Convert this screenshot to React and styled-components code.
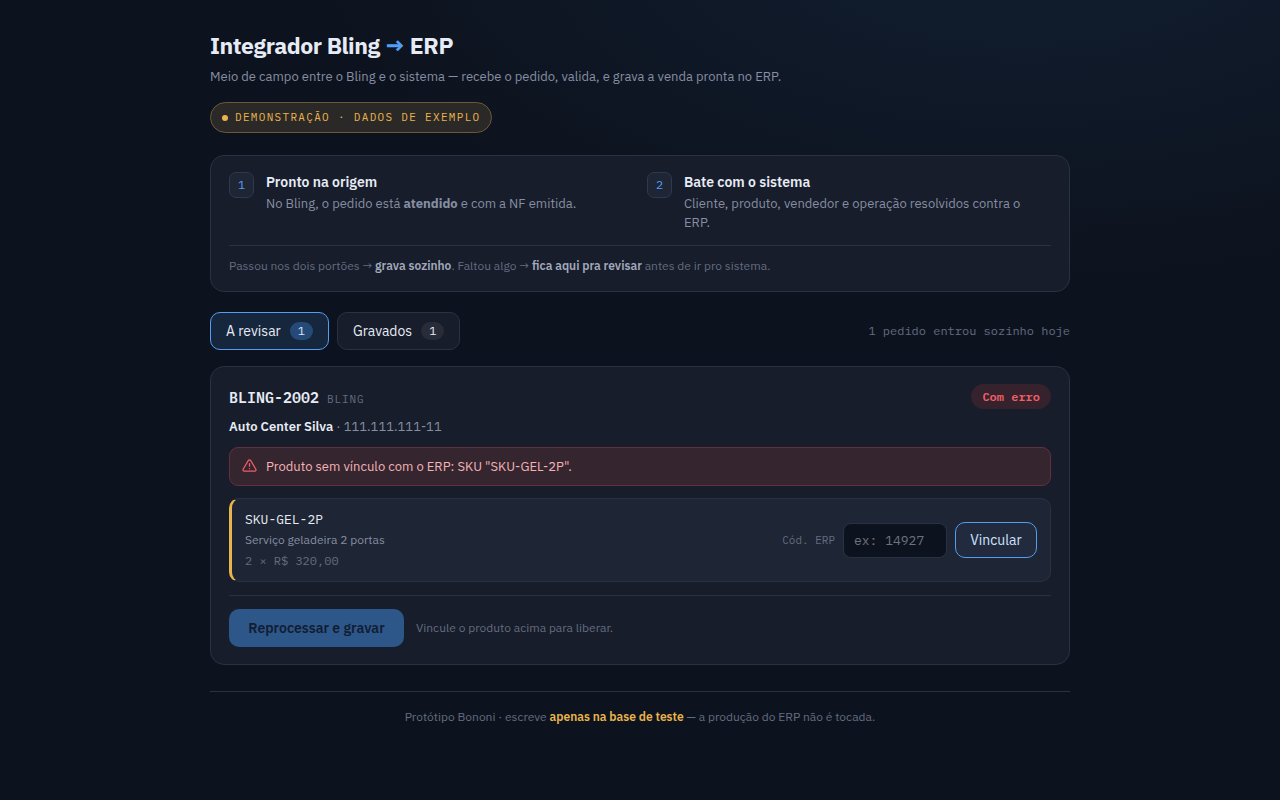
import React, { useState } from "react";
import styled, { createGlobalStyle } from "styled-components";

const SANS = `"IBM Plex Sans", "Roboto", "Liberation Sans", sans-serif`;
const MONO = `"IBM Plex Mono", "Liberation Mono", monospace`;

const c = {
  bg: "#0d131e",
  card: "#171d2a",
  raised: "#1e2534",
  line: "#2a3140",
  text: "#e7ebf5",
  muted: "#868ea2",
  dim: "#646c80",
  blue: "#549cf4",
  amber: "#e9b44c",
  red: "#ef5f67",
};

const Global = createGlobalStyle`
  *, *::before, *::after { box-sizing: border-box; }
  body {
    margin: 0;
    min-height: 100vh;
    color: ${c.text};
    font: 14px/21px ${SANS};
    background: radial-gradient(1200px 600px at 80% -10%, #111e31 0%, transparent 60%) no-repeat ${c.bg};
  }
  h1, h2, h3, p { margin: 0; }
  button, input { font: inherit; }
`;

const Page = styled.div`
  max-width: 900px;
  margin: 0 auto;
  padding: 29px 20px 60px;
`;

const Title = styled.h1`
  font-size: 23px;
  line-height: 32px;
  font-weight: 700;
  letter-spacing: -0.02em;
  span { color: ${c.blue}; }
`;

const Subtitle = styled.p`
  margin-top: 6px;
  font-size: 13px;
  line-height: 20px;
  color: ${c.muted};
`;

const DemoPill = styled.div`
  display: inline-flex;
  align-items: center;
  gap: 7px;
  height: 31px;
  margin-top: 15px;
  padding: 0 10px 0 11px;
  border: 1px solid #6a5a35;
  border-radius: 16px;
  background: #2b2928;
  color: ${c.amber};
  font: 11px/15px ${MONO};
  letter-spacing: 0.12em;
  text-transform: uppercase;
  &::before {
    content: "";
    width: 6px;
    height: 6px;
    border-radius: 50%;
    background: ${c.amber};
  }
`;

const Card = styled.section`
  border: 1px solid ${c.line};
  border-radius: 14px;
  background: ${c.card};
  padding: 16px 18px;
`;

const GatesCard = styled(Card)`
  margin-top: 22px;
`;

const Gates = styled.div`
  display: grid;
  grid-template-columns: 1fr 1fr;
  gap: 14px;
`;

const Gate = styled.div`
  display: flex;
  align-items: flex-start;
  gap: 12px;
  padding-right: 12px;
`;

const GateNumber = styled.span`
  flex: none;
  width: 25px;
  height: 26px;
  border: 1px solid #30384b;
  border-radius: 7px;
  background: ${c.raised};
  color: ${c.blue};
  font: 12px/24px ${MONO};
  text-align: center;
`;

const GateTitle = styled.h2`
  font-size: 14px;
  line-height: 21px;
  font-weight: 600;
`;

const GateText = styled.p`
  font-size: 13px;
  line-height: 19px;
  color: ${c.muted};
  padding-top: 1px;
`;

const GateNote = styled.p`
  margin-top: 13px;
  padding-top: 11px;
  border-top: 1px solid ${c.line};
  font-size: 12px;
  line-height: 18px;
  color: ${c.dim};
  strong { color: #a2a9bc; font-weight: 600; }
`;

const Toolbar = styled.div`
  display: flex;
  align-items: center;
  gap: 8px;
  margin: 20px 0 16px;
`;

const Count = styled.span`
  min-width: 23px;
  padding: 0 8px;
  border-radius: 9px;
  background: ${(p) => (p.$active ? "#264a77" : "#272c38")};
  color: ${(p) => (p.$active ? "#d5e6ff" : c.text)};
  font: 12px/18px ${MONO};
`;

const Tab = styled.button`
  display: inline-flex;
  align-items: center;
  gap: 9px;
  height: 38px;
  padding: 0 15px;
  border: 1px solid ${(p) => (p.$active ? c.blue : c.line)};
  border-radius: 10px;
  background: ${(p) => (p.$active ? "#16273d" : c.card)};
  color: ${c.text};
  font-size: 14px;
  cursor: pointer;
`;

const Summary = styled.span`
  margin-left: auto;
  color: ${c.dim};
  font: 12px/18px ${MONO};
`;

const OrderCard = styled(Card)`
  padding: 17px 18px;
`;

const OrderHead = styled.div`
  display: flex;
  justify-content: space-between;
  align-items: flex-start;
`;

const OrderId = styled.h2`
  padding-top: 3px;
  font: 600 15px/21px ${MONO};
  span {
    margin-left: 8px;
    color: ${c.dim};
    font-size: 11px;
    font-weight: 400;
    letter-spacing: 0.08em;
  }
`;

const Status = styled.span`
  padding: 0 11px;
  border-radius: 13px;
  background: #35222c;
  color: ${c.red};
  font: 600 12px/25px ${MONO};
`;

const Customer = styled.p`
  margin-top: 7px;
  font-size: 13px;
  line-height: 20px;
  color: ${c.muted};
  strong { color: ${c.text}; font-weight: 600; }
`;

const Alert = styled.div`
  display: flex;
  align-items: flex-start;
  gap: 9px;
  margin-top: 10px;
  padding: 9px 12px;
  border: 1px solid #63303b;
  border-radius: 9px;
  background: #35252f;
  color: #f2b3b6;
  font-size: 13px;
  line-height: 19px;
  svg { margin-top: 1px; color: ${c.red}; }
`;

const Item = styled.div`
  display: flex;
  align-items: center;
  justify-content: space-between;
  margin-top: 12px;
  padding: 10px 13px;
  border: 1px solid ${c.line};
  border-left: 3px solid ${c.amber};
  border-radius: 10px;
  background: ${c.raised};
`;

const ItemSku = styled.p`
  font: 13px/21px ${MONO};
`;

const ItemName = styled.p`
  font-size: 12px;
  line-height: 20px;
  color: ${c.muted};
`;

const ItemPrice = styled.p`
  font: 12px/21px ${MONO};
  color: ${c.dim};
`;

const LinkForm = styled.form`
  display: flex;
  align-items: center;
  gap: 8px;
`;

const CodeLabel = styled.label`
  color: ${c.dim};
  font: 11px/18px ${MONO};
`;

const CodeInput = styled.input`
  width: 104px;
  height: 35px;
  padding: 0 10px;
  border: 1px solid ${c.line};
  border-radius: 8px;
  background: ${c.bg};
  color: ${c.text};
  font: 13px/18px ${MONO};
  &::placeholder { color: #6d727c; opacity: 1; }
`;

const LinkButton = styled.button`
  min-width: 82px;
  height: 36px;
  padding: 0 12px;
  border: 1px solid ${c.blue};
  border-radius: 10px;
  background: #222b3e;
  color: #cfe2ff;
  font-size: 14px;
  cursor: pointer;
`;

const Actions = styled.div`
  display: flex;
  align-items: center;
  gap: 12px;
  margin-top: 13px;
  padding-top: 13px;
  border-top: 1px solid ${c.line};
`;

const PrimaryButton = styled.button`
  min-width: 175px;
  height: 38px;
  padding: 0 18px;
  border: 0;
  border-radius: 10px;
  background: #2e5789;
  color: #101d33;
  font-size: 14px;
  font-weight: 600;
`;

const Hint = styled.span`
  color: ${c.dim};
  font-size: 12px;
  line-height: 20px;
`;

const Footer = styled.footer`
  margin-top: 26px;
  padding-top: 16px;
  border-top: 1px solid ${c.line};
  color: ${c.dim};
  font-size: 12px;
  line-height: 18px;
  text-align: center;
  strong { color: ${c.amber}; font-weight: 600; }
`;

function WarningIcon() {
  return (
    <svg width="15" height="15" viewBox="0 0 24 24" fill="none" stroke="currentColor" strokeWidth="2" strokeLinecap="round" strokeLinejoin="round" aria-hidden="true">
      <path d="M10.29 3.86 1.82 18a2 2 0 0 0 1.71 3h16.94a2 2 0 0 0 1.71-3L13.71 3.86a2 2 0 0 0-3.42 0z" />
      <path d="M12 9v4M12 17h.01" />
    </svg>
  );
}

export default function App() {
  const [tab, setTab] = useState("revisar");
  const [code, setCode] = useState("");
  const tabs = [
    { id: "revisar", label: "A revisar", count: 1 },
    { id: "gravados", label: "Gravados", count: 1 },
  ];

  return (
    <>
      <Global />
      <Page>
        <header>
          <Title>Integrador Bling <span>→</span> ERP</Title>
          <Subtitle>Meio de campo entre o Bling e o sistema — recebe o pedido, valida, e grava a venda pronta no ERP.</Subtitle>
          <DemoPill>Demonstração · dados de exemplo</DemoPill>
        </header>

        <GatesCard>
          <Gates>
            <Gate>
              <GateNumber>1</GateNumber>
              <div>
                <GateTitle>Pronto na origem</GateTitle>
                <GateText>No Bling, o pedido está <strong>atendido</strong> e com a NF emitida.</GateText>
              </div>
            </Gate>
            <Gate>
              <GateNumber>2</GateNumber>
              <div>
                <GateTitle>Bate com o sistema</GateTitle>
                <GateText>Cliente, produto, vendedor e operação resolvidos contra o ERP.</GateText>
              </div>
            </Gate>
          </Gates>
          <GateNote>
            Passou nos dois portões → <strong>grava sozinho</strong>. Faltou algo → <strong>fica aqui pra revisar</strong> antes de ir pro sistema.
          </GateNote>
        </GatesCard>

        <Toolbar>
          {tabs.map((t) => (
            <Tab key={t.id} type="button" $active={tab === t.id} onClick={() => setTab(t.id)}>
              {t.label}
              <Count $active={tab === t.id}>{t.count}</Count>
            </Tab>
          ))}
          <Summary>1 pedido entrou sozinho hoje</Summary>
        </Toolbar>

        <OrderCard>
          <OrderHead>
            <OrderId>BLING-2002<span>BLING</span></OrderId>
            <Status>Com erro</Status>
          </OrderHead>
          <Customer><strong>Auto Center Silva</strong> · 111.111.111-11</Customer>
          <Alert role="alert">
            <WarningIcon />
            Produto sem vínculo com o ERP: SKU "SKU-GEL-2P".
          </Alert>
          <Item>
            <div>
              <ItemSku>SKU-GEL-2P</ItemSku>
              <ItemName>Serviço geladeira 2 portas</ItemName>
              <ItemPrice>2 × R$ 320,00</ItemPrice>
            </div>
            <LinkForm onSubmit={(e) => e.preventDefault()}>
              <CodeLabel htmlFor="erp-code">Cód. ERP</CodeLabel>
              <CodeInput id="erp-code" placeholder="ex: 14927" value={code} onChange={(e) => setCode(e.target.value)} />
              <LinkButton type="submit">Vincular</LinkButton>
            </LinkForm>
          </Item>
          <Actions>
            <PrimaryButton type="button" disabled>Reprocessar e gravar</PrimaryButton>
            <Hint>Vincule o produto acima para liberar.</Hint>
          </Actions>
        </OrderCard>

        <Footer>
          Protótipo Bononi · escreve <strong>apenas na base de teste</strong> — a produção do ERP não é tocada.
        </Footer>
      </Page>
    </>
  );
}
